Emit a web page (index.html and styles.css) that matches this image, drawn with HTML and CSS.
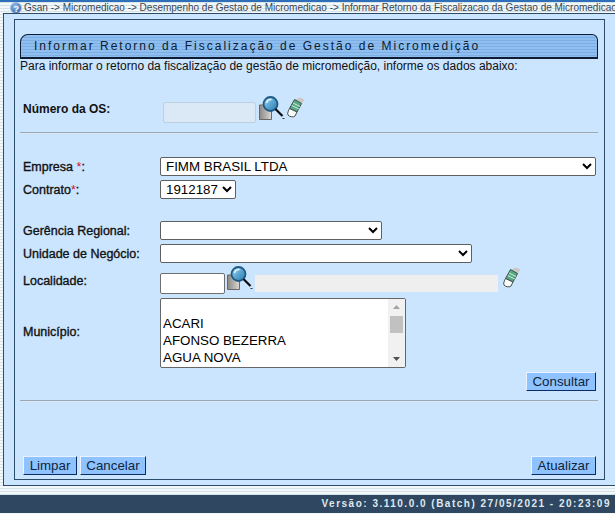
FILE: index.html
```html
<!DOCTYPE html>
<html lang="pt">
<head>
<meta charset="utf-8">
<title>Informar Retorno</title>
<link rel="stylesheet" href="styles.css">
</head>
<body>
<div class="topline"></div>
<div class="crumb">
  <svg class="help" width="14" height="12" viewBox="0 0 14 12"><defs><radialGradient id="ball" cx=".4" cy=".3" r=".8"><stop offset="0" stop-color="#8fb8e6"/><stop offset="1" stop-color="#2f62ac"/></radialGradient></defs><circle cx="7" cy="6" r="5.500" fill="url(#ball)" stroke="#a9c0dc"/><text x="4.500" y="9.500" font-size="9" font-family="Liberation Sans" font-weight="700" fill="#fff">?</text></svg>
  <span class="crumb-text">Gsan -&gt; Micromedicao -&gt; Desempenho de Gestao de Micromedicao -&gt; Informar Retorno da Fiscalizacao da Gestao de Micromedicao</span>
</div>
<div class="outer">
  <main class="panel">
    <div class="title-bar">Informar Retorno da Fiscalização de Gestão de Micromedição</div>
    <p class="intro">Para informar o retorno da fiscalização de gestão de micromedição, informe os dados abaixo:</p>

    <div class="row os-row">
      <label class="label bold os-label">Número da OS:</label>
      <input class="field os-input" disabled>
      <svg class="lupa" width="26" height="24" viewBox="0 0 26 24"><use href="#lupa"/></svg>
      <svg class="eraser eraser-os" width="20" height="22" viewBox="0 0 20 22"><use href="#eraser"/></svg>
    </div>
    <hr class="rule rule-os">

    <div class="row empresa-row">
      <label class="label">Empresa <span class="req">*</span>:</label>
      <select class="sel sel-empresa"><option>FIMM BRASIL LTDA</option></select>
    </div>
    <div class="row contrato-row">
      <label class="label">Contrato<span class="req">*</span>:</label>
      <select class="sel sel-contrato"><option>1912187</option></select>
    </div>
    <div class="row gerencia-row">
      <label class="label">Gerência Regional:</label>
      <select class="sel sel-gerencia"><option></option></select>
    </div>
    <div class="row unidade-row">
      <label class="label">Unidade de Negócio:</label>
      <select class="sel sel-unidade"><option></option></select>
    </div>
    <div class="row localidade-row">
      <label class="label loc-label">Localidade:</label>
      <input class="field loc-input">
      <svg class="lupa lupa-loc" width="26" height="24" viewBox="0 0 26 24"><use href="#lupa"/></svg>
      <input class="field loc-name" disabled>
      <svg class="eraser" width="20" height="22" viewBox="0 0 20 22"><use href="#eraser"/></svg>
    </div>
    <div class="row municipio-row">
      <label class="label mun-label">Município:</label>
      <div class="listbox">
        <div class="list-items">
          <div class="item">&nbsp;</div>
          <div class="item">ACARI</div>
          <div class="item">AFONSO BEZERRA</div>
          <div class="item">AGUA NOVA</div>
        </div>
        <div class="scrollbar">
          <svg width="17" height="17" viewBox="0 0 17 17"><path d="M5 10h7L8.500 6z" fill="#a3a3a3"/></svg>
          <div class="thumb"></div>
          <div class="spacer"></div>
          <svg width="17" height="17" viewBox="0 0 17 17"><path d="M5 7h7L8.500 11z" fill="#505050"/></svg>
        </div>
      </div>
    </div>
    <div class="consult-row"><button class="btn btn-consultar">Consultar</button></div>
    <hr class="rule rule-consult">
    <div class="actions">
      <div class="actions-left">
        <button class="btn btn-limpar">Limpar</button>
        <button class="btn btn-cancelar">Cancelar</button>
      </div>
      <button class="btn btn-atualizar">Atualizar</button>
    </div>
  </main>
</div>
<footer class="footer">Versão: 3.110.0.0 (Batch) 27/05/2021 - 20:23:09</footer>

<svg class="defs" width="0" height="0">
  <defs>
    <linearGradient id="doc" x1="0" x2="1" y1="0" y2="0"><stop offset="0" stop-color="#8a8784"/><stop offset=".5" stop-color="#b3b0ac"/><stop offset="1" stop-color="#dcdad6"/></linearGradient>
    <linearGradient id="lens" x1="0" x2="1" y1="0" y2="1"><stop offset="0" stop-color="#a8dcf2"/><stop offset=".5" stop-color="#5aa6d2"/><stop offset="1" stop-color="#2f7aa8"/></linearGradient>
    <symbol id="lupa" viewBox="0 0 26 24">
      <path d="M.500 9h7l5 4v10.500h-12z" fill="url(#doc)" stroke="#6a6764"/>
      <circle cx="11.500" cy="8" r="7" fill="url(#lens)" stroke="#1f5a86" stroke-width="1.800"/>
      <path d="M7.500 7a4.500 4.500 0 0 1 5-3.500" stroke="#e4f5fc" stroke-width="1.600" fill="none"/>
      <path d="M16.500 13l7 7" stroke="#0c0c0c" stroke-width="2.200"/>
      <path d="M23.500 22.500h2" stroke="#333" stroke-width="1"/>
    </symbol>
    <symbol id="eraser" viewBox="0 0 20 22">
      <path d="M9 2.500l5-2 4.500 2-3 5z" fill="#c8c8c8"/>
      <path d="M8.500 2.500l7 4L11 15l-7.500-3.500z" fill="#55a983" stroke="#3e4f48"/>
      <path d="M7 6l7 3.500M5.800 8.500l7 3.500" stroke="#cfeedd" stroke-width="1"/>
      <path d="M3.500 11.500L11 15l-2 4c-1 1.500-5.500 1-7-1-1-1.500.5-4.500 1.500-6.500z" fill="#fbfbfb" stroke="#3e4f48"/>
    </symbol>
  </defs>
</svg>
</body>
</html>
```
FILE: styles.css
```css
* { box-sizing: border-box; }
html, body { margin: 0; padding: 0; }
body {
  position: relative;
  width: 615px;
  height: 514px;
  overflow: hidden;
  font-family: "Liberation Sans", Arial, sans-serif;
  font-size: 12px;
  color: #000;
  background: repeating-linear-gradient(to bottom, #f3f8fb 0, #f3f8fb 2px, #d5e3ea 2px, #d5e3ea 3px);
}
.topline { height: 2px; background: #2f6fb8; }
.crumb {
  height: 11px;
  display: flex;
  align-items: center;
  white-space: nowrap;
  overflow: hidden;
  font-size: 10px;
  color: #3a4652;
  padding-left: 9px;
  gap: 1px;
}
.help { flex: none; }
.crumb-text { flex: none; }
.outer {
  margin-left: 3px;
  width: 620px;
  height: 473px;
  padding: 5px 0 0 10px;
  background: #cbe5ff;
  border: 1px solid #2d4a68;
}
.panel {
  width: 591px;
  height: 461px;
  background: #cbe5ff;
  border: 1px solid #2d4a68;
  padding: 14px 6px 0 5px;
}
.title-bar {
  height: 25px;
  border: 1px solid #0e1d34;
  border-bottom-width: 2px;
  border-radius: 8px 6px 0 0;
  background: repeating-linear-gradient(to bottom, #8fbff0 0, #8fbff0 2px, #7daee4 2px, #7daee4 3px);
  padding-left: 13px;
  font-size: 12px;
  line-height: 22px;
  letter-spacing: 2px;
  color: #0c1c30;
  white-space: nowrap;
}
.intro { margin: 0; height: 15px; line-height: 15px; font-size: 12px; color: #111; }
.row { display: flex; align-items: center; }
.label { width: 140px; flex: none; padding-left: 3px; font-size: 12.500px; color: #111; -webkit-text-stroke: 0.35px #111; }
.label.bold { font-weight: 700; font-size: 12px; -webkit-text-stroke: 0; }
.req { color: #d0103c; -webkit-text-stroke: 0; }
.os-row { margin-top: 22px; height: 28px; align-items: flex-start; }
.os-label { margin-top: 6px; }
.field { border: 1px solid #6f6f6f; border-radius: 2px; background: #fff; padding: 0; height: 21px; font-family: inherit; flex: none; }
.os-input { width: 93px; margin: 6px 3px 0 3px; background: #dbe8f5; border-color: #bdd0e2; }
.eraser { margin-top: 1px; flex: none; }
.eraser-os { margin-left: 1px; }
.lupa { flex: none; }
.rule { margin: 0; border: 0; border-top: 1px solid #9aa9b7; border-bottom: 1px solid #d9e7f5; height: 2px; width: 578px; }
.rule-os { margin-top: 8px; }
.sel {
  font-family: "Liberation Sans", Arial, sans-serif;
  font-size: 13.333px;
  height: 19px;
  padding: 0 0 0 1px;
  background: #fff;
  border: 1px solid #5f5f5f;
  border-radius: 2px;
  color: #000;
  flex: none;
}
.empresa-row { margin-top: 23px; height: 19px; }
.sel-empresa { width: 436px; }
.contrato-row { margin-top: 4px; height: 19px; }
.sel-contrato { width: 76px; }
.gerencia-row { margin-top: 22px; height: 19px; }
.sel-gerencia { width: 222px; }
.unidade-row { margin-top: 4px; height: 19px; }
.sel-unidade { width: 312px; }
.localidade-row { margin-top: 3px; height: 27px; align-items: flex-start; }
.loc-label { margin-top: 8px; }
.loc-input { width: 65px; margin-top: 7px; }
.lupa-loc { margin-left: 2px; }
.loc-name { width: 243px; height: 17px; border: 0; border-radius: 0; background: #efefef; margin: 9px 4px 0 2px; }
.municipio-row { margin-top: 5px; }
.mun-label { padding-bottom: 2px; }
.listbox {
  width: 246px;
  height: 70px;
  background: #fff;
  border: 1px solid #666;
  border-radius: 2px;
  display: flex;
  overflow: hidden;
}
.list-items { flex: 1; margin-top: -1px; padding-left: 2px; font-size: 13.333px; line-height: 17px; }
.item { height: 17px; }
.scrollbar { width: 17px; background: #f1f1f1; display: flex; flex-direction: column; flex: none; }
.thumb { height: 17px; margin: 0 2px; background: #c1c1c1; flex: none; }
.spacer { flex: 1; }
.consult-row { display: flex; justify-content: flex-end; margin-top: 4px; height: 19px; width: 576px; }
.btn {
  font-family: "Liberation Sans", Arial, sans-serif;
  font-size: 13.333px;
  height: 19px;
  padding: 0;
  color: #10233a;
  background: #8fc3ff;
  border: 1px solid;
  border-color: #e8f3ff #0b2a66 #0b2a66 #e8f3ff;
  line-height: 16px;
}
.btn-consultar { width: 70px; }
.btn-limpar { width: 54px; }
.btn-cancelar { width: 66px; }
.btn-atualizar { width: 65px; }
.rule-consult { margin-top: 9px; }
.actions { margin-top: 54px; padding: 0 2px 0 3px; width: 578px; display: flex; justify-content: space-between; }
.actions-left { display: flex; gap: 3px; }
.footer {
  position: absolute;
  left: 0; top: 495px;
  width: 615px;
  height: 18px;
  background: #2f4760;
  color: #dfe7ef;
  font-size: 10px;
  font-weight: 700;
  letter-spacing: 1.500px;
  line-height: 18px;
  text-align: right;
  padding-right: 4px;
}
.defs { position: absolute; }
```
